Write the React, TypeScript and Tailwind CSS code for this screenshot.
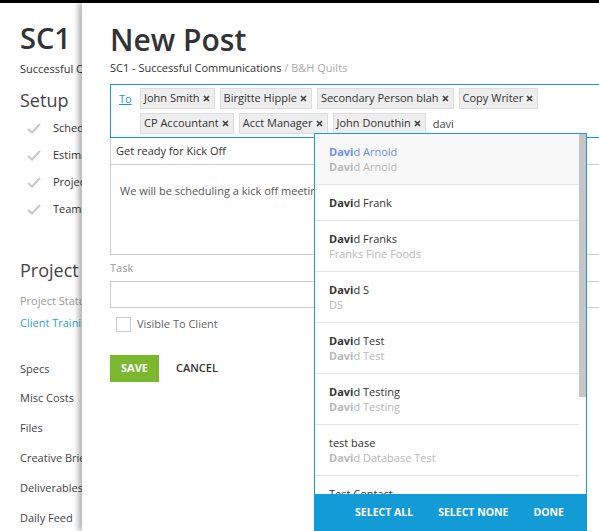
import React from 'react';

type Match = { name: string; sub?: string; boldName?: boolean; boldSub?: boolean; active?: boolean };

const matches: Match[] = [
  { name: 'David Arnold', sub: 'David Arnold', boldName: true, boldSub: true, active: true },
  { name: 'David Frank', boldName: true },
  { name: 'David Franks', sub: 'Franks Fine Foods', boldName: true },
  { name: 'David S', sub: 'DS', boldName: true },
  { name: 'David Test', sub: 'David Test', boldName: true, boldSub: true },
  { name: 'David Testing', sub: 'David Testing', boldName: true, boldSub: true },
  { name: 'test base', sub: 'David Database Test', boldSub: true },
  { name: 'Test Contact', sub: 'Test Contact' },
];

const recipients = [
  'John Smith',
  'Birgitte Hipple',
  'Secondary Person blah',
  'Copy Writer',
  'CP Accountant',
  'Acct Manager',
  'John Donuthin',
];

const setupItems = ['Schedule', 'Estimate', 'Project Info', 'Team'];
const navItems = ['Specs', 'Misc Costs', 'Files', 'Creative Brief', 'Deliverables', 'Daily Feed'];

// highlight the typed "Davi" prefix
const Hl = ({ text, on }: { text: string; on?: boolean }) => {
  if (!on || !text.startsWith('Davi')) return <>{text}</>;
  return (
    <>
      <span className="font-bold">{text.slice(0, 4)}</span>
      {text.slice(4)}
    </>
  );
};

const Check = () => (
  <svg width="14" height="11" viewBox="0 0 14 11" className="shrink-0">
    <path d="M1 6 L5 9.5 L13 1" fill="none" stroke="#c8c8c8" strokeWidth="2" />
  </svg>
);

const Chip = ({ label }: { label: string }) => (
  <div className="flex items-center h-[21px] pl-[3px] pr-[4px] gap-[3px] bg-[#eeeeee] border border-[#dddddd] text-[11px] text-[#333]">
    <span>{label}</span>
    <svg width="7" height="7" viewBox="0 0 7 7">
      <path d="M1 1 L6 6 M6 1 L1 6" stroke="#444" strokeWidth="1.7" />
    </svg>
  </div>
);

export default function App() {
  return (
    <div className="relative w-[599px] h-[531px] overflow-hidden bg-white font-['Open_Sans',sans-serif] text-[#333]">
      <div className="h-[3px] bg-black" />

      {/* sidebar behind the drawer */}
      <div className="pl-[20px] pt-[18px] flex flex-col">
        <div className="text-[29px] leading-[34px] font-semibold">SC1</div>
        <div className="mt-[6px] text-[11px] leading-[16px] whitespace-nowrap">Successful Communications</div>
        <div className="mt-[11px] text-[18px] leading-[24px] text-[#444]">Setup</div>
        <div className="mt-[3px] flex flex-col">
          {setupItems.map(s => (
            <div key={s} className="h-[27px] flex items-center pl-[7px] gap-[12px] text-[11px]">
              <Check />
              <span>{s}</span>
            </div>
          ))}
        </div>
        <div className="mt-[35px] text-[18px] leading-[24px] text-[#444] whitespace-nowrap">Project Details</div>
        <div className="mt-[10px] text-[11px] leading-[18px] text-[#999]">Project Status</div>
        <div className="mt-[4px] text-[11px] leading-[18px] text-[#2aa5dd]">Client Training</div>
        <div className="mt-[22px] flex flex-col">
          {navItems.map(n => (
            <div key={n} className="h-[29.8px] flex items-center text-[11px] text-[#444] whitespace-nowrap">{n}</div>
          ))}
        </div>
      </div>

      {/* drawer */}
      <div className="absolute top-[3px] left-[82px] bottom-0 w-[600px] bg-white shadow-[-4px_0_5px_rgba(0,0,0,0.28)] pl-[28px] pt-[19px]">
        <div className="text-[30px] leading-[36px] font-semibold">New Post</div>
        <div className="mt-[2px] text-[11px] leading-[16px]">
          SC1 - Successful Communications <span className="text-[#aaa]">/ B&amp;H Quilts</span>
        </div>

        <div className="mt-[8px] w-[505px]">
          <div className="flex items-start border border-[#1a9ad6] pl-[8px] py-[3px]">
            <span className="w-[21px] h-[21px] leading-[21px] shrink-0 text-[11px] text-[#1a9ad6] underline">To</span>
            <div className="flex flex-wrap gap-x-[5px] gap-y-[4px]">
              {recipients.map(r => (
                <Chip key={r} label={r} />
              ))}
              <span className="h-[21px] leading-[21px] pl-[2px] text-[11px] text-[#444]">davi</span>
            </div>
          </div>
          <div className="h-[27px] flex items-center pl-[5px] border-x border-b border-[#cccccc] text-[11px]">
            Get ready for Kick Off
          </div>
          <div className="h-[90px] pl-[9px] pt-[17px] border-x border-b border-[#cccccc] text-[11px] leading-[18px] text-[#555] whitespace-nowrap">
            We will be scheduling a kick off meeting with the client next week.
          </div>
          <div className="mt-[4px] text-[11px] leading-[18px] text-[#999]">Task</div>
          <div className="mt-[4px] h-[27px] border border-[#cccccc]" />
          <div className="mt-[8px] ml-[6px] flex items-center gap-[6px]">
            <div className="w-[15px] h-[15px] border border-[#cccccc] bg-white" />
            <span className="text-[11px] text-[#666]">Visible To Client</span>
          </div>
          <div className="mt-[22px] flex items-center gap-[17px]">
            <button className="w-[49px] h-[27px] bg-[#7cb82f] text-white text-[11px] font-bold">SAVE</button>
            <button className="text-[11px] font-semibold text-[#333]">CANCEL</button>
          </div>
        </div>

        {/* autocomplete menu */}
        <div className="absolute top-[130px] left-[232px] w-[273px] h-[399px] border-x border-t border-[#1a9ad6] bg-white flex flex-col">
          <div className="flex flex-1 min-h-0">
            <div className="flex-1 overflow-hidden">
              {matches.map((m, i) => (
                <div
                  key={i}
                  className={`pl-[14px] pt-[10px] pb-[10px] border-b border-[#e4e4e4] text-[11px] leading-[15px] ${m.active ? 'bg-[#f8f8f8]' : ''}`}
                >
                  <div className={m.active ? 'text-[#6d8ff2]' : 'text-[#333]'}>
                    <Hl text={m.name} on={m.boldName} />
                  </div>
                  {m.sub && (
                    <div className="text-[#b8b8b8]">
                      <Hl text={m.sub} on={m.boldSub} />
                    </div>
                  )}
                </div>
              ))}
            </div>
            <div className="w-[7px] shrink-0">
              <div className="h-[263px] bg-[#c6c6c6]" />
            </div>
          </div>
          <div className="h-[38px] shrink-0 bg-[#129bd5] flex items-center justify-end gap-[25px] pr-[22px] text-[10.5px] font-bold text-white">
            <span>SELECT ALL</span>
            <span>SELECT NONE</span>
            <span>DONE</span>
          </div>
        </div>
      </div>
    </div>
  );
}
